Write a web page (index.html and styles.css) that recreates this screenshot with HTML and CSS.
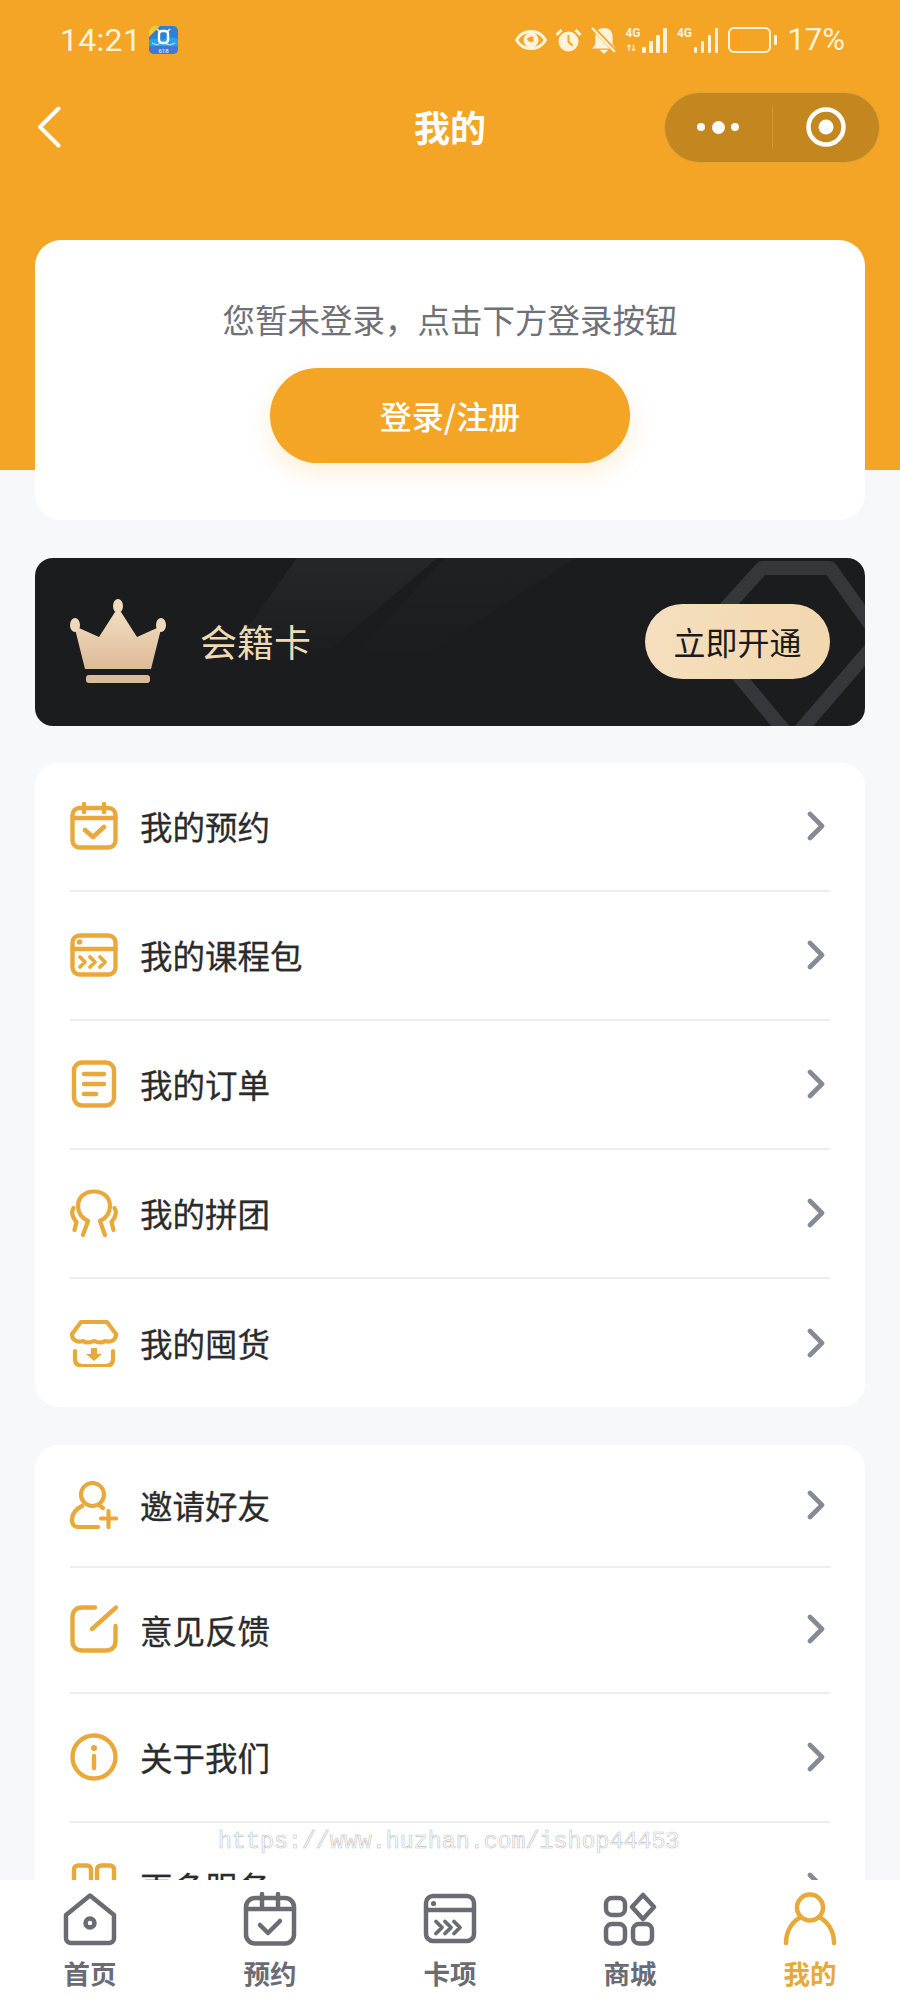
FILE: index.html
```html
<!DOCTYPE html>
<html lang="zh">
<head>
<meta charset="utf-8">
<title>我的</title>
<link rel="stylesheet" href="styles.css">
</head>
<body>
<div class="page">
  <header class="hero">
    <div class="status">
      <div class="status-left">
        <span class="time">14:21</span>
        <svg class="app-badge" viewBox="0 0 29 28"><rect width="29" height="28" rx="5" fill="#2f7fd8"/><path d="M0 11V5a5 5 0 0 1 5-5h6z" fill="#f4c82e"/><path d="M0 14c6-3 10 1 15-1s9-2 14 0v7H0z" fill="#27a3e6"/><path d="M0 20h29v3a5 5 0 0 1-5 5H5a5 5 0 0 1-5-5z" fill="#3f78d6"/><rect x="10" y="5" width="9" height="12" rx="3" fill="none" stroke="#fff" stroke-width="2.400"/><path d="M8 3l3 3M21 3l-3 3" stroke="#fff" stroke-width="1.600"/><path d="M3 17l5 2 4-2M17 18l4 1 5-2" fill="none" stroke="#cdeeff" stroke-width="1"/><text x="14.500" y="26.500" class="badge-text" text-anchor="middle">618</text></svg>
      </div>
      <div class="status-right">
        <svg class="ic-eye" viewBox="0 0 32 20"><path d="M1.500 10C5 4 10 1.500 16 1.500S27 4 30.500 10C27 16 22 18.500 16 18.500S5 16 1.500 10z" fill="none" stroke="#fff3dc" stroke-width="3"/><circle cx="16" cy="10" r="7.500" fill="#fff3dc"/><path d="M12 9c2-3 5-3 7-2-1 1-1 3 0 4-3 2-6 1-7-2z" fill="#f5a623"/></svg>
        <svg class="ic-alarm" viewBox="0 0 27 24"><circle cx="13.500" cy="13.500" r="10" fill="#fff3dc"/><path d="M13.500 7v7l4 3.500" fill="none" stroke="#f5a623" stroke-width="2"/><path d="M1.500 7l5-5M25.500 7l-5-5" stroke="#fff3dc" stroke-width="3"/></svg>
        <svg class="ic-bell" viewBox="0 0 24 25"><path d="M12 1c6 0 8 4 8 9v6l3 4H1l3-4v-6c0-5 2-9 8-9z" fill="#fff3dc"/><path d="M8 21h8l-4 4z" fill="#fff3dc"/><path d="M2 1l21 22" stroke="#f5a623" stroke-width="4"/><path d="M1 1l21 22" stroke="#fff3dc" stroke-width="2"/></svg>
        <div class="signal">
          <div class="net"><span class="net-label">4G</span><span class="net-arrow">↑↓</span></div>
          <div class="bars"><i class="b1"></i><i class="b2"></i><i class="b3"></i><i class="b4"></i></div>
        </div>
        <div class="signal">
          <div class="net"><span class="net-label">4G</span></div>
          <div class="bars"><i class="b1"></i><i class="b2"></i><i class="b3"></i><i class="b4"></i></div>
        </div>
        <div class="battery"><div class="battery-body"><div class="battery-fill"></div></div><div class="battery-nub"></div></div>
        <span class="percent">17%</span>
      </div>
    </div>
    <div class="nav">
      <svg class="back" viewBox="0 0 24 42"><path d="M21.500 2.500L3 21l18.500 18.500" fill="none" stroke="#fff" stroke-width="4" stroke-linecap="round" stroke-linejoin="round"/></svg>
      <h1 class="title">我的</h1>
      <div class="capsule">
        <div class="capsule-cell"><i class="dot"></i><i class="dot dot-big"></i><i class="dot"></i></div>
        <div class="capsule-line"></div>
        <div class="capsule-cell"><svg class="target" viewBox="0 0 40 40"><circle cx="20" cy="20" r="17.500" fill="none" stroke="#fff" stroke-width="4.500"/><circle cx="20" cy="20" r="7.500" fill="#fff"/></svg></div>
      </div>
    </div>
  </header>

  <main class="content">
    <section class="login-card">
      <p class="login-tip">您暂未登录，点击下方登录按钮</p>
      <div class="login-btn">登录/注册</div>
    </section>

    <section class="vip-card">
      <svg class="vip-bg" viewBox="0 0 830 168" preserveAspectRatio="none"><defs><linearGradient id="stripeFade" x1="0" y1="0" x2="0" y2="1"><stop offset="0" stop-color="#fff" stop-opacity=".05"/><stop offset=".8" stop-color="#fff" stop-opacity="0"/></linearGradient></defs><path d="M262 0h140L250 130H170z" fill="url(#stripeFade)"/><path d="M410 0h130L340 130H290z" fill="url(#stripeFade)" fill-opacity=".4"/><path d="M727 10H795L845 80L757 182L668 75Z" fill="none" stroke="#36373a" stroke-width="14" stroke-linejoin="round"/></svg>
      <svg class="crown" viewBox="0 0 96 84"><defs><linearGradient id="crownFill" x1="0" y1="0" x2="0" y2="1"><stop offset="0" stop-color="#f2dcbf"/><stop offset="1" stop-color="#dcbb98"/></linearGradient></defs><path d="M45 13L29 38L9 29L5 30L15 70H81L91 30L87 29L67 38L51 13Z" fill="url(#crownFill)"/><ellipse cx="48" cy="7" rx="5" ry="7" fill="#f2dcbf"/><ellipse cx="5" cy="26" rx="5" ry="7" fill="#f0d9bb"/><ellipse cx="91" cy="26" rx="5" ry="7" fill="#f0d9bb"/><rect x="16" y="76" width="64" height="8" rx="3" fill="#dcbb98"/></svg>
      <span class="vip-name">会籍卡</span>
      <div class="vip-btn">立即开通</div>
    </section>

    <section class="menu menu-a">
      <div class="row">
        <svg class="row-ic" viewBox="0 0 48 48"><g fill="none" stroke="#e9a93a" stroke-width="4.400" stroke-linecap="round" stroke-linejoin="round"><rect x="2.500" y="6" width="43" height="39.500" rx="7"/><path d="M2.500 16h43M14 2v8M34 2v8"/><path d="M15 28l8 7 11-10" stroke-width="4.800"/></g></svg>
        <span class="row-text">我的预约</span>
        <svg class="chev" viewBox="0 0 18 30"><path d="M3 3l12 12L3 27" /></svg>
      </div>
      <div class="row">
        <svg class="row-ic row-ic-short" viewBox="0 0 48 44"><g fill="none" stroke="#e9a93a" stroke-width="4.400" stroke-linecap="round" stroke-linejoin="round"><rect x="2.500" y="2.500" width="43" height="39" rx="7"/><path d="M2.500 16h43"/><path d="M10 24l5 5-5 5M20 24l5 5-5 5M30 24l5 5-5 5" stroke-width="3.800"/></g><circle cx="9.500" cy="9" r="2.800" fill="#e9a93a"/></svg>
        <span class="row-text">我的课程包</span>
        <svg class="chev" viewBox="0 0 18 30"><path d="M3 3l12 12L3 27" /></svg>
      </div>
      <div class="row">
        <svg class="row-ic" viewBox="0 0 48 48"><g fill="none" stroke="#e9a93a" stroke-width="4.400" stroke-linecap="round" stroke-linejoin="round"><rect x="4" y="2.500" width="40" height="43" rx="8"/><path d="M14 14h20M14 24h20M14 34h12"/></g></svg>
        <span class="row-text">我的订单</span>
        <svg class="chev" viewBox="0 0 18 30"><path d="M3 3l12 12L3 27" /></svg>
      </div>
      <div class="row">
        <svg class="row-ic" viewBox="0 0 48 48"><g fill="none" stroke="#e9a93a" stroke-width="4.200" stroke-linecap="round" stroke-linejoin="round"><path d="M13 46L18 32C10 28 8 22 8 17C8 8 15 2.500 24 2.500S40 8 40 17C40 22 38 28 30 32L35 46"/><path d="M3.500 19C1 23 1.500 27 6.500 33L4.500 41M44.500 19C47 23 46.500 27 41.500 33L43.500 41"/></g></svg>
        <span class="row-text">我的拼团</span>
        <svg class="chev" viewBox="0 0 18 30"><path d="M3 3l12 12L3 27" /></svg>
      </div>
      <div class="row">
        <svg class="row-ic" viewBox="0 0 48 48"><g fill="none" stroke="#e9a93a" stroke-width="4.200" stroke-linecap="round" stroke-linejoin="round"><path d="M11 3H37L46 15C46 21 41 24 35 22C31 25 27 23 24 22C21 23 17 25 13 22C7 24 2 21 2 15Z"/><path d="M5 32V40C5 45 8 47 13 47H35C40 47 43 45 43 40V32"/></g><path d="M21 29h6v6h5l-8 7-8-7h5z" fill="#e9a93a"/></svg>
        <span class="row-text">我的囤货</span>
        <svg class="chev" viewBox="0 0 18 30"><path d="M3 3l12 12L3 27" /></svg>
      </div>
    </section>

    <section class="menu menu-b">
      <div class="row">
        <svg class="row-ic" viewBox="0 0 48 48"><g fill="none" stroke="#e9a93a" stroke-width="4.200" stroke-linecap="round" stroke-linejoin="round"><circle cx="22.500" cy="13.500" r="11.500"/><path d="M29 24l4 3M12 25C6 28 2 33 2 39c0 4 2 7 6 7h20"/><path d="M31 37.500h15M38.500 30v16"/></g></svg>
        <span class="row-text">邀请好友</span>
        <svg class="chev" viewBox="0 0 18 30"><path d="M3 3l12 12L3 27" /></svg>
      </div>
      <div class="row">
        <svg class="row-ic" viewBox="0 0 48 48"><g fill="none" stroke="#e9a93a" stroke-width="4.400" stroke-linecap="round" stroke-linejoin="round"><path d="M25 2.500H12C6 2.500 2.500 6 2.500 12v24c0 6 3.500 9.500 9.500 9.500h24c6 0 9.500-3.500 9.500-9.500V21"/><path d="M22 24L46 2.500"/></g></svg>
        <span class="row-text">意见反馈</span>
        <svg class="chev" viewBox="0 0 18 30"><path d="M3 3l12 12L3 27" /></svg>
      </div>
      <div class="row">
        <svg class="row-ic" viewBox="0 0 48 48"><g fill="none" stroke="#e9a93a" stroke-width="4.400" stroke-linecap="round"><circle cx="24" cy="24" r="21.500"/><path d="M24 23v12"/></g><circle cx="24" cy="15" r="3" fill="#e9a93a"/></svg>
        <span class="row-text">关于我们</span>
        <svg class="chev" viewBox="0 0 18 30"><path d="M3 3l12 12L3 27" /></svg>
      </div>
      <div class="row">
        <svg class="row-ic" viewBox="0 0 48 48"><g fill="none" stroke="#e9a93a" stroke-width="4.400" stroke-linejoin="round"><rect x="4" y="2.500" width="17" height="18" rx="4"/><rect x="27" y="2.500" width="17" height="18" rx="4"/><rect x="4" y="28" width="17" height="18" rx="4"/><rect x="27" y="28" width="17" height="18" rx="4"/></g></svg>
        <span class="row-text">更多服务</span>
        <svg class="chev" viewBox="0 0 18 30"><path d="M3 3l12 12L3 27" /></svg>
      </div>
    </section>
  </main>

  <div class="watermark">https://www.huzhan.com/ishop44453</div>

  <nav class="tabbar">
    <div class="tab">
      <svg class="tab-ic" viewBox="0 0 54 54"><g fill="none" stroke="#6b6b73" stroke-width="4.500" stroke-linejoin="round"><path d="M27 3.500L3 23V46a5 5 0 0 0 5 5H46a5 5 0 0 0 5-5V23Z"/><circle cx="27" cy="31" r="4.500"/></g></svg>
      <span class="tab-label">首页</span>
    </div>
    <div class="tab">
      <svg class="tab-ic" viewBox="0 0 54 54"><g fill="none" stroke="#6b6b73" stroke-width="4.500" stroke-linecap="round" stroke-linejoin="round"><rect x="3" y="6" width="48" height="45.500" rx="9"/><path d="M3 17h48M19 2v12M35 2v12"/><path d="M17 33l8 8 12-12"/></g></svg>
      <span class="tab-label">预约</span>
    </div>
    <div class="tab">
      <svg class="tab-ic" viewBox="0 0 54 54"><g fill="none" stroke="#6b6b73" stroke-width="4.500" stroke-linecap="round" stroke-linejoin="round"><rect x="3" y="4" width="48" height="45" rx="7"/><path d="M3 18h48"/><path d="M13 29.500l6 6-6 6M22 29.500l6 6-6 6M31 29.500l6 6-6 6" stroke-width="3.800"/></g><circle cx="10.500" cy="11.500" r="2.600" fill="#6b6b73"/></svg>
      <span class="tab-label">卡项</span>
    </div>
    <div class="tab">
      <svg class="tab-ic" viewBox="0 0 54 54"><g fill="none" stroke="#6b6b73" stroke-width="4.500" stroke-linejoin="round"><rect x="3" y="6" width="19" height="17" rx="6"/><path d="M40 3l11 12-11 12-11-12z"/><rect x="3" y="32" width="19" height="19.500" rx="6"/><rect x="30" y="32" width="19" height="19.500" rx="6"/></g></svg>
      <span class="tab-label">商城</span>
    </div>
    <div class="tab tab-active">
      <svg class="tab-ic" viewBox="0 0 54 54"><g fill="none" stroke="#e9a93a" stroke-width="4.500" stroke-linecap="round"><circle cx="27" cy="15.500" r="13"/><path d="M3 51c0-13 7-22 15-26M51 51c0-13-7-22-15-26"/></g></svg>
      <span class="tab-label">我的</span>
    </div>
  </nav>
</div>
</body>
</html>
```

FILE: styles.css
```css
* { box-sizing: border-box; }
html, body { margin: 0; padding: 0; }
body {
  font-family: "Noto Sans CJK SC", "Noto Sans", sans-serif;
  background: #f7f8fa;
}
.page {
  position: relative;
  width: 900px;
  height: 2000px;
  overflow: hidden;
  background: #f7f8fa;
}
.hero {
  height: 470px;
  background: #f4a526;
  padding: 24px 20px 0 37px;
  margin-bottom: -230px;
}
.status {
  height: 32px;
  display: flex;
  justify-content: space-between;
  align-items: center;
  color: #fff3dc;
  margin-left: 23px;
  margin-right: 35px;
}
.status-left { display: flex; align-items: center; gap: 8px; }
.time { font: 400 32px/32px Roboto, sans-serif; letter-spacing: .3px; }
.app-badge { width: 29px; height: 28px; }
.badge-text { font: 6px Roboto, sans-serif; fill: #fff; }
.status-right { display: flex; align-items: center; }
.ic-eye { width: 32px; height: 20px; margin-right: 8px; }
.ic-alarm { width: 27px; height: 24px; margin-right: 9px; }
.ic-bell { width: 26px; height: 27px; margin-right: 8px; }
.signal { display: flex; align-items: flex-end; height: 26px; margin-right: 10px; }
.net { width: 17px; height: 26px; display: flex; flex-direction: column; justify-content: space-between; }
.net-label { font: 700 12px/13px Roboto, sans-serif; }
.net-arrow { font: 700 9px/9px "DejaVu Sans", sans-serif; letter-spacing: -3px; }
.bars { display: flex; align-items: flex-end; gap: 3.500px; height: 25px; }
.bars i { display: block; width: 3.500px; background: #fff3dc; border-radius: 1px; }
.b1 { height: 6px; }
.b2 { height: 12px; }
.b3 { height: 18px; }
.b4 { height: 25px; }
.battery { display: flex; align-items: center; gap: 3px; margin: 0 10px 0 0; }
.battery-body { width: 43px; height: 26px; border: 2.500px solid #fff3dc; border-radius: 6px; padding: 2px; }
.battery-fill { width: 8px; height: 100%; background: #fca01c; }
.battery-nub { width: 3px; height: 10px; background: #fff3dc; border-radius: 1px; }
.percent { font: 400 31px/32px Roboto, sans-serif; }

.nav {
  position: relative;
  display: flex;
  align-items: center;
  justify-content: space-between;
  height: 70px;
  margin-top: 36px;
}
.back { width: 24px; height: 42px; }
.title {
  position: absolute;
  left: 0;
  right: 0;
  top: -1px;
  margin: 0 0 0 -17px;
  text-align: center;
  color: #fff;
  font-size: 36px;
  line-height: 70px;
  font-weight: 700;
}
.capsule {
  display: flex;
  align-items: center;
  width: 216px;
  height: 71px;
  background: #c4871f;
  border: 1px solid #dba43e;
  border-radius: 36px;
}
.capsule-cell {
  flex: 1;
  display: flex;
  align-items: center;
  justify-content: center;
  gap: 6.500px;
}
.capsule-line { width: 1px; height: 42px; background: #d19636; }
.dot { width: 8px; height: 8px; border-radius: 50%; background: #fff; }
.dot-big { width: 13px; height: 13px; }
.target { width: 40px; height: 40px; }

.content {
  position: relative;
  display: flex;
  flex-direction: column;
  padding: 0 35px;
}
.login-card {
  height: 280px;
  background: #fff;
  border-radius: 26px;
  padding-top: 55px;
  display: flex;
  flex-direction: column;
  align-items: center;
}
.login-tip {
  margin: 0;
  font-size: 32.500px;
  line-height: 48px;
  color: #6f7178;
}
.login-btn {
  margin-top: 25px;
  width: 360px;
  height: 95px;
  border-radius: 48px;
  background: #f4a526;
  color: #fff;
  font-size: 32px;
  font-weight: 500;
  line-height: 94px;
  text-align: center;
  box-shadow: 0 10px 24px rgba(245, 166, 35, .18);
}
.vip-card {
  position: relative;
  margin-top: 38px;
  height: 168px;
  border-radius: 18px;
  background: #1b1c1e;
  overflow: hidden;
  display: flex;
  align-items: center;
  padding: 0 35px 2px;
}
.vip-bg { position: absolute; inset: 0; width: 100%; height: 100%; }
.crown { position: relative; width: 96px; height: 84px; }
.vip-name {
  position: relative;
  margin-left: 34px;
  font-size: 37px;
  color: #f0d9b5;
}
.vip-btn {
  position: relative;
  margin-left: auto;
  width: 185px;
  height: 75px;
  border-radius: 38px;
  background: linear-gradient(100deg, #f5dfbf, #f2d7ae);
  color: #1a1a1a;
  font-size: 32px;
  line-height: 75px;
  text-align: center;
}
.menu {
  background: #fff;
  border-radius: 24px;
  padding: 0 35px;
  margin-top: 37px;
}
.row {
  display: flex;
  align-items: center;
  height: 129px;
  padding-bottom: 2px;
  border-bottom: 2px solid #eeeeee;
}
.row:last-child { border-bottom: 0; }
.menu-a .row:last-child { height: 128px; padding-bottom: 1px; }
.menu-b { margin-top: 38px; }
.menu-b .row:nth-child(1) { height: 123px; }
.menu-b .row:nth-child(2) { height: 126px; }
.row-ic { width: 48px; height: 48px; flex: none; }
.row-ic-short { height: 44px; }
.row-text {
  margin-left: 22px;
  font-size: 32.500px;
  color: #2b2b2b;
  -webkit-text-stroke: .3px #2b2b2b;
}
.chev {
  margin-left: auto;
  margin-right: 5px;
  width: 18px;
  height: 30px;
  fill: none;
  stroke: #868a94;
  stroke-width: 4.600;
  stroke-linecap: round;
  stroke-linejoin: round;
}
.watermark {
  position: absolute;
  left: 218px;
  top: 1828px;
  font: 23.300px/28px "Liberation Mono", monospace;
  color: transparent;
  -webkit-text-stroke: .6px #c2c2c2;
}
.tabbar {
  position: absolute;
  left: 0;
  right: 0;
  bottom: 0;
  height: 120px;
  background: #fff;
  display: grid;
  grid-template-columns: repeat(5, 1fr);
}
.tab {
  display: flex;
  flex-direction: column;
  align-items: center;
  padding-top: 12px;
}
.tab-ic { width: 54px; height: 54px; }
.tab-label {
  margin-top: 9px;
  font-size: 26.500px;
  line-height: 36px;
  font-weight: 700;
  color: #6b6b73;
}
.tab-active .tab-label { color: #e9a93a; }
```
